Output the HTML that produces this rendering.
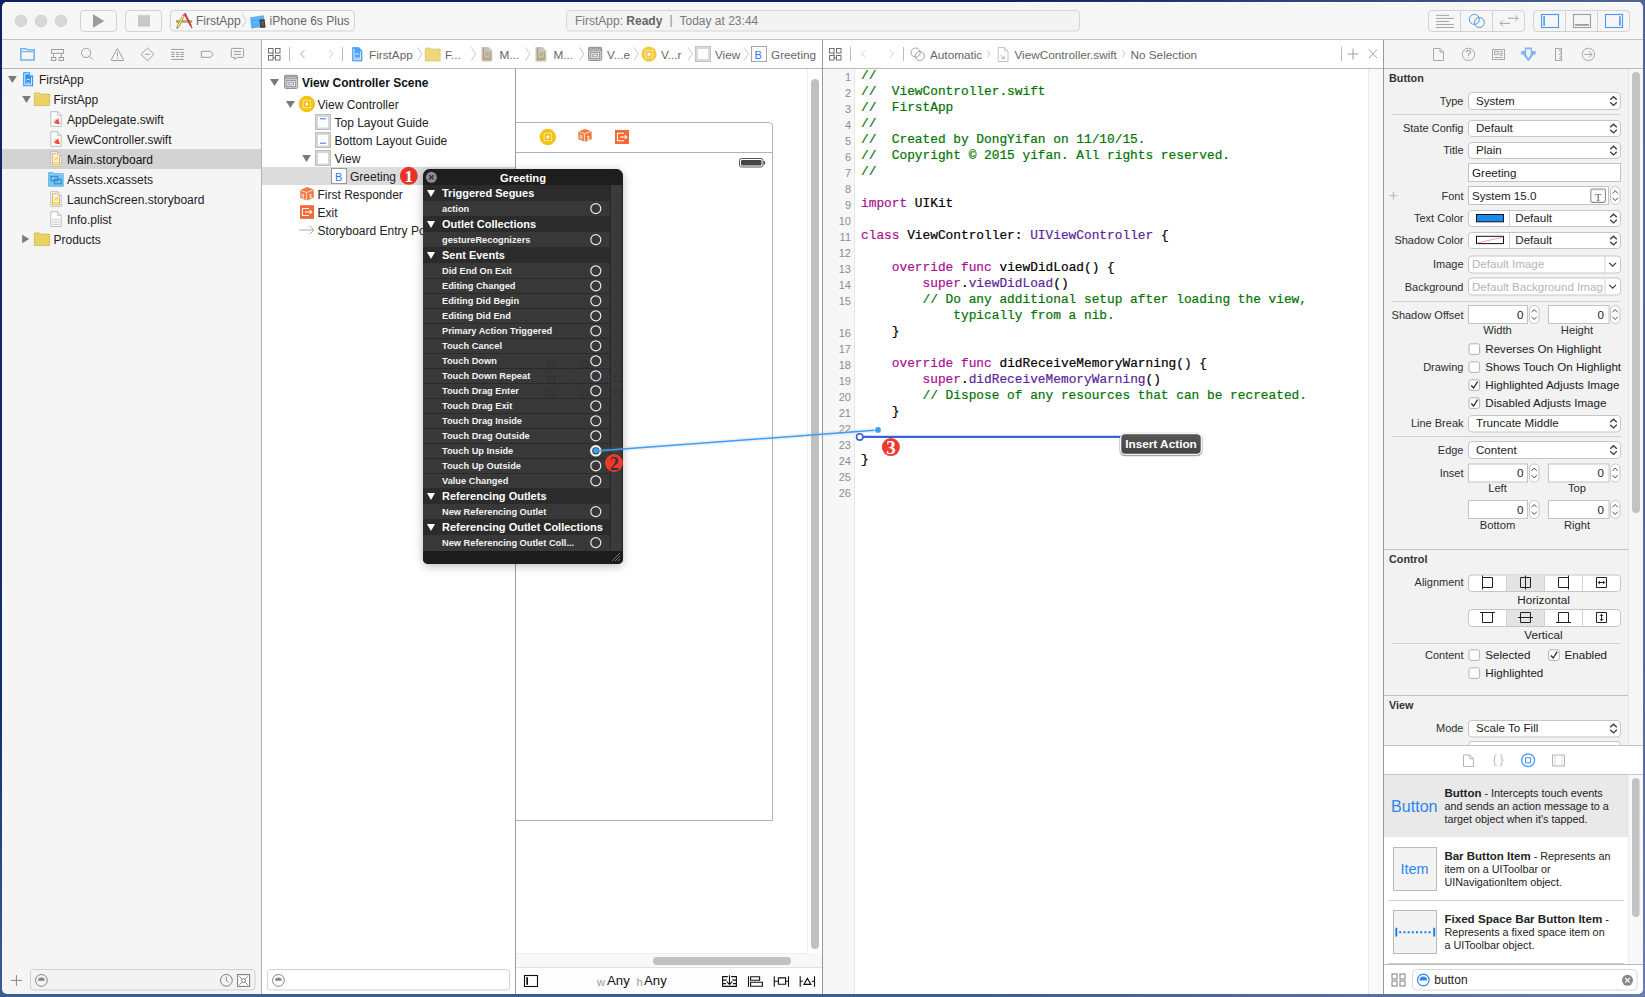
<!DOCTYPE html>
<html><head><meta charset="utf-8">
<style>
*{box-sizing:border-box;margin:0;padding:0}
html,body{width:1645px;height:997px;overflow:hidden}
body{background:linear-gradient(90deg,rgba(0,0,0,0) 60%,rgba(140,155,190,0.55) 100%),linear-gradient(180deg,#0a2462 0%,#102e6a 70%,#3c5c96 100%);font-family:"Liberation Sans",sans-serif;font-size:12px;color:#222;position:relative}
.a{position:absolute}
#win{position:absolute;left:0;top:0;width:1645px;height:997px;clip-path:inset(2px 2px 3px 2px round 5px)}
.t{position:absolute;white-space:pre;line-height:14px;height:14px}
.hl{position:absolute;height:1px;background:#b4b4b4}
.vl{position:absolute;width:1px;background:#a0a0a0}
svg.ov{position:absolute;left:0;top:0;overflow:visible}
.g{color:#666}
.code{position:absolute;left:861px;font-family:"Liberation Mono",monospace;font-size:12.82px;line-height:16px;white-space:pre;color:#000;-webkit-text-stroke:0.2px currentColor}
.ln{position:absolute;left:823px;width:28px;text-align:right;font-family:"Liberation Sans",sans-serif;font-size:11px;color:#8e8e8e;line-height:16px}
.cm{color:#007400}.kw{color:#aa0d91}.ty{color:#5c2699}
.lb{position:absolute;right:181.5px;white-space:pre;font-size:11px;line-height:14px;color:#2e2e2e;text-align:right}
.pv{position:absolute;white-space:pre;font-size:11.6px;line-height:14px;color:#1a1a1a}
.sl{position:absolute;white-space:pre;font-size:11.2px;line-height:14px;color:#2e2e2e;text-align:center;width:80px}
.hd{position:absolute;white-space:pre;font-size:10.8px;font-weight:bold;line-height:14px;color:#333}
</style></head><body>
<div id="win">
  <!-- ===== BACKGROUNDS ===== -->
  <div class="a" style="left:0;top:0;width:1645px;height:39px;background:#f6f6f6"></div>
  <div class="hl" style="left:0;top:39px;width:1645px;background:#c4c4c4"></div>
  <div class="a" style="left:0;top:40px;width:261px;height:28px;background:#f5f5f5"></div>
  <div class="a" style="left:262px;top:40px;width:560px;height:28px;background:#fff"></div>
  <div class="a" style="left:823px;top:40px;width:560px;height:28px;background:#fff"></div>
  <div class="a" style="left:1384px;top:40px;width:261px;height:28px;background:#f5f5f5"></div>
  <div class="hl" style="left:0;top:68px;width:1645px;background:#b9b9b9"></div>
  <div class="a" style="left:0;top:69px;width:261px;height:928px;background:#f5f5f5"></div>
  <div class="vl" style="left:261px;top:40px;height:957px;background:#b2b2b2"></div>
  <div class="a" style="left:262px;top:69px;width:253px;height:928px;background:#fff"></div>
  <div class="vl" style="left:515px;top:69px;height:928px;background:#9d9d9d"></div>
  <div class="a" style="left:516px;top:69px;width:306px;height:928px;background:#fff"></div>
  <div class="vl" style="left:822px;top:40px;height:957px;background:#999"></div>
  <div class="a" style="left:823px;top:69px;width:560px;height:928px;background:#fff"></div>
  <div class="vl" style="left:1383px;top:40px;height:957px;background:#999"></div>
  <div class="a" style="left:1384px;top:69px;width:261px;height:928px;background:#f2f2f2"></div>

  <!-- ===== TOOLBAR ===== -->
  <div class="a" style="left:2px;top:2px;width:1641px;height:1px;background:#fff"></div>
  <svg class="ov" width="1645" height="40">
    <circle cx="21" cy="21" r="5.8" fill="#d8d8d8" stroke="#cdcdcd" stroke-width="0.8"/>
    <circle cx="41" cy="21" r="5.8" fill="#d8d8d8" stroke="#cdcdcd" stroke-width="0.8"/>
    <circle cx="61" cy="21" r="5.8" fill="#d8d8d8" stroke="#cdcdcd" stroke-width="0.8"/>
    <rect x="80.5" y="10.5" width="36" height="21" rx="3.5" fill="#f7f7f7" stroke="#d2d2d2"/>
    <path d="M93 14.2 L104.3 21 L93 27.8Z" fill="#9c9c9c"/>
    <rect x="125.5" y="10.5" width="36" height="21" rx="3.5" fill="#f7f7f7" stroke="#d2d2d2"/>
    <rect x="138" y="15.2" width="12" height="11.5" fill="#c9c9c9"/>
    <rect x="170.5" y="10.5" width="184" height="20.5" rx="3.5" fill="#f7f7f7" stroke="#d2d2d2"/>
    <!-- xcode app icon -->
    <rect x="176" y="20.2" width="16.2" height="2.5" fill="#b79566"/>
    <path d="M176.6 21.2 H191.6" stroke="#d8c09a" stroke-width="0.5"/>
    <path d="M184.6 13.3 L191.2 26.4" stroke="#c73a3a" stroke-width="2"/>
    <path d="M191.2 26.4 L192 28.3" stroke="#8a6a5a" stroke-width="1.2"/>
    <path d="M182.8 17 L177.6 27.2" stroke="#6a6a40" stroke-width="2.6"/>
    <path d="M182.8 17 L177.6 27.2" stroke="#f2e64a" stroke-width="1.7"/>
    <path d="M183.2 16.3 L184.1 14.6" stroke="#e8607a" stroke-width="2.4"/>
    <path d="M177.5 27.3 L176.9 28.5" stroke="#444" stroke-width="1.2"/>
    <path d="M242 14 L246.4 20.8 L242 27.5" fill="none" stroke="#c4c4c4" stroke-width="0.8"/>
    <!-- simulator icon -->
    <path d="M250.2 17.2 L263.8 15.3 L265 27 L251.2 28.4Z" fill="#56adf2"/>
    <path d="M252 18.6 L262.4 17.2 M253 23 L262.8 21.8" stroke="#8ccaf8" stroke-width="0.5"/>
    <path d="M259.4 19.8 L264.6 19.2 L265.6 27.4 L260.4 28.1Z" fill="#3a3a3a"/>
    <path d="M260.5 21 L263.8 20.6 L264.5 26.2 L261.2 26.6Z" fill="#5a5a5a"/>
    <rect x="566.5" y="10.5" width="513" height="20.5" rx="3.5" fill="#f3f3f3" stroke="#d6d6d6"/>
    <!-- right segmented groups -->
    <rect x="1428.5" y="10.5" width="96" height="21" rx="3.5" fill="#f6f6f6" stroke="#d3d3d3"/>
    <path d="M1460.5 11 V31 M1492.5 11 V31" stroke="#d3d3d3"/>
    <path d="M1436 15.4 H1449 M1436 18.4 H1454 M1436 21.5 H1449 M1436 24.5 H1454 M1436 27.5 H1454" stroke="#9e9e9e" stroke-width="0.9"/>
    <circle cx="1474.3" cy="19.4" r="5" fill="none" stroke="#4a98f2" stroke-width="1"/>
    <circle cx="1479.4" cy="22.5" r="5" fill="none" stroke="#4a98f2" stroke-width="1"/>
    <path d="M1508 18.3 H1518 M1515 15.3 L1518 18.3 L1515 21.3 M1500 23.4 H1510 M1503 20.4 L1500 23.4 L1503 26.4" fill="none" stroke="#9e9e9e" stroke-width="0.9"/>
    <rect x="1533.5" y="10.5" width="96" height="21" rx="3.5" fill="#f6f6f6" stroke="#d3d3d3"/>
    <path d="M1565.5 11 V31 M1597.5 11 V31" stroke="#d3d3d3"/>
    <rect x="1541.5" y="14.5" width="17" height="13" fill="none" stroke="#4a98f2" stroke-width="1.1"/>
    <rect x="1543.3" y="16.2" width="1.6" height="9.6" fill="#4a98f2"/>
    <rect x="1573.5" y="14.5" width="17" height="13" fill="none" stroke="#9e9e9e" stroke-width="1.1"/>
    <rect x="1575" y="24" width="14" height="1.8" fill="#9e9e9e"/>
    <rect x="1605.5" y="14.5" width="17" height="13" fill="none" stroke="#4a98f2" stroke-width="1.1"/>
    <rect x="1619.1" y="16.2" width="1.6" height="9.6" fill="#4a98f2"/>
  </svg>
  <div class="t g" style="left:196px;top:14px">FirstApp</div>
  <div class="t g" style="left:269.5px;top:14px">iPhone 6s Plus</div>
  <div class="t" style="left:575px;top:14px;color:#7a7a7a">FirstApp: <b style="color:#666">Ready</b></div>
  <div class="t" style="left:669.5px;top:13px;color:#8a8a8a">|</div>
  <div class="t" style="left:679.5px;top:14px;color:#7a7a7a">Today at 23:44</div>

  <!-- ===== NAVIGATOR ===== -->
  <svg class="ov" width="1645" height="997">
    <!-- nav bar icons -->
    <path d="M20.8 60 V48.8 H26 L27 49.8 H34.2 V60Z" fill="none" stroke="#74b0f6" stroke-width="1.6"/>
    <path d="M21.5 51.6 H33.5" stroke="#74b0f6" stroke-width="1.2"/>
    <g fill="none" stroke="#9d9d9d" stroke-width="1">
      <rect x="51.5" y="49.5" width="12" height="3.8"/>
      <path d="M53.6 53.3 V57.3 M61.4 53.3 V57.3"/>
      <rect x="51.5" y="57.5" width="4.3" height="3"/>
      <rect x="59.2" y="57.5" width="4.3" height="3"/>
      <circle cx="86.1" cy="52.9" r="4.6"/>
      <path d="M89.4 56.2 L93 59.8"/>
      <path d="M117.4 48.6 L123.6 59.8 Q123.9 60.5 123.1 60.5 H111.7 Q110.9 60.5 111.2 59.8Z" stroke-linejoin="round"/>
      <path d="M117.4 52.3 V56.6 M117.4 58 V59"/>
      <path d="M147.5 48 L154 54.4 L147.5 60.8 L141 54.4Z" stroke-linejoin="round"/>
      <path d="M145.2 54.4 H149.8"/>
      <path d="M171.2 49.4 H183.9 M171.2 59.4 H183.9"/>
      <path d="M171.2 52.4 H174.8 M176 52.4 H179 M180.2 52.4 H183.9 M171.2 54.4 H174.8 M176 54.4 H179 M180.2 54.4 H183.9 M171.2 56.5 H174.8 M176 56.5 H179 M180.2 56.5 H183.9"/>
      <path d="M201.3 51.3 H210.5 L213.4 54.3 L210.5 57.3 H201.3Z"/>
      <path d="M232.3 48.4 H242.6 Q243.6 48.4 243.6 49.4 V56.4 Q243.6 57.4 242.6 57.4 H237.2 L234.7 59.4 V57.4 H232.3 Q231.3 57.4 231.3 56.4 V49.4 Q231.3 48.4 232.3 48.4Z"/>
      <path d="M234 51.5 H241 M234 54.4 H241"/>
    </g>
    <!-- tree -->
    <path d="M8 76 L16.8 76 L12.4 83Z" fill="#7a7a7a"/>
    <path d="M22.2 96 L30.8 96 L26.5 103Z" fill="#7a7a7a"/>
    <path d="M22.2 234.8 L29.2 239 L22.2 243.2Z" fill="#7a7a7a"/>
    <!-- project icon -->
    <path d="M23.2 72.2 H29.8 L33.1 75.5 V86.2 H23.2Z" fill="#2a8ff2"/>
    <path d="M29.8 72.2 V75.5 H33.1Z" fill="#e6f1fd"/>
    <path d="M24.8 73.8 H29 M24.8 73.8 V84.8 H31.6 V77" fill="none" stroke="#fff" stroke-width="0.9"/>
    <path d="M26.2 83.1 H30.3" stroke="#fff" stroke-width="0.9"/>
    <path d="M26.4 80.2 Q28.2 77.6 30 80.2" fill="none" stroke="#fff" stroke-width="1"/>
    <!-- folder icons -->
    <path d="M34.4 93 H39.5 L40.5 94.1 H49.6 V105.6 H34.4Z" fill="#e9d262" stroke="#c9b24a" stroke-width="0.7"/>
    <path d="M34.8 94.3 H39 L39.7 95.1" fill="none" stroke="#f7ea80" stroke-width="0.8"/>
    <path d="M34.4 233 H39.5 L40.5 234.1 H49.6 V245.6 H34.4Z" fill="#e9d262" stroke="#c9b24a" stroke-width="0.7"/>
    <!-- swift files -->
    <g>
      <path d="M50.8 111.7 H57.5 L61.2 115.4 V126.4 H50.8Z" fill="#fff" stroke="#b8b8b8" stroke-width="0.9"/>
      <path d="M57.5 111.7 V115.4 H61.2" fill="none" stroke="#b8b8b8" stroke-width="0.8"/>
      <path d="M52.6 121.8 Q56.2 124.8 60 123.89999999999999 Q58.6 122.19999999999999 58.3 117.8 Q57.4 120.8 55 119.0 Q56.4 121.0 56.4 121.39999999999999 Q54.8 120.6 53.3 119.19999999999999 Q54.6 121.19999999999999 55.4 122.1 Q54 122.39999999999999 52.6 121.8Z" fill="#f2492c"/>
      <path d="M50.8 131.7 H57.5 L61.2 135.4 V146.4 H50.8Z" fill="#fff" stroke="#b8b8b8" stroke-width="0.9"/>
      <path d="M57.5 131.7 V135.4 H61.2" fill="none" stroke="#b8b8b8" stroke-width="0.8"/>
      <path d="M52.6 141.79999999999998 Q56.2 144.79999999999998 60 143.9 Q58.6 142.2 58.3 137.79999999999998 Q57.4 140.79999999999998 55 139.0 Q56.4 141.0 56.4 141.4 Q54.8 140.6 53.3 139.2 Q54.6 141.2 55.4 142.1 Q54 142.4 52.6 141.79999999999998Z" fill="#f2492c"/>
    </g>
    <!-- selected row -->
  </svg>
  <div class="a" style="left:2px;top:149px;width:259px;height:20px;background:#d3d3d3"></div>
  <svg class="ov" width="1645" height="997">
    <!-- storyboard files -->
    <path d="M50.8 151.7 H57.5 L61.2 155.39999999999998 V166.39999999999998 H50.8Z" fill="#fff" stroke="#b5b5b5" stroke-width="0.9"/>
    <path d="M57.5 151.7 V155.39999999999998 H61.2" fill="none" stroke="#b5b5b5" stroke-width="0.8"/>
    <path d="M52.6 153.5 H56.6 M52.6 153.5 V164.7 H59.4 V156.29999999999998" fill="none" stroke="#f0b428" stroke-width="1.1"/>
    <path d="M53 162.89999999999998 H59" stroke="#f0b428" stroke-width="0.9"/>
    <path d="M54.2 160.29999999999998 L57.8 156.89999999999998 M54.4 158.1 Q56 156.5 58 159.29999999999998 Q57 160.89999999999998 54.8 159.7" fill="none" stroke="#f0b428" stroke-width="0.8"/>
    <!-- assets -->
    <path d="M48.5 172.6 H53 L54 173.6 H63.3 V186.3 H48.5Z" fill="#74c6f4" stroke="#52abe0" stroke-width="0.7"/>
    <path d="M48.8 174.6 H63" stroke="#9ad8f8" stroke-width="0.6"/>
    <rect x="51" y="176.3" width="6.8" height="4.6" fill="#74c6f4" stroke="#2b7fc4" stroke-width="0.9"/>
    <rect x="54.4" y="179.2" width="6.8" height="4.6" fill="none" stroke="#2b7fc4" stroke-width="0.9"/>
    <path d="M50.8 191.7 H57.5 L61.2 195.39999999999998 V206.39999999999998 H50.8Z" fill="#fff" stroke="#b5b5b5" stroke-width="0.9"/>
    <path d="M57.5 191.7 V195.39999999999998 H61.2" fill="none" stroke="#b5b5b5" stroke-width="0.8"/>
    <path d="M52.6 193.5 H56.6 M52.6 193.5 V204.7 H59.4 V196.29999999999998" fill="none" stroke="#f0b428" stroke-width="1.1"/>
    <path d="M53 202.89999999999998 H59" stroke="#f0b428" stroke-width="0.9"/>
    <path d="M54.2 200.29999999999998 L57.8 196.89999999999998 M54.4 198.1 Q56 196.5 58 199.29999999999998 Q57 200.89999999999998 54.8 199.7" fill="none" stroke="#f0b428" stroke-width="0.8"/>
    <!-- plist -->
    <path d="M50.8 211.7 H57.5 L61.2 215.4 V226.4 H50.8Z" fill="#fff" stroke="#b8b8b8" stroke-width="0.9"/>
    <path d="M57.5 211.7 V215.4 H61.2" fill="none" stroke="#b8b8b8" stroke-width="0.8"/>
    <path d="M52.8 219.5 H59.2 V224.5 H52.8Z M52.8 222 H59.2 M56 219.5 V224.5" fill="none" stroke="#c4c4c4" stroke-width="0.7"/>
    <!-- bottom bar -->
    <path d="M16.4 975 V986 M11 980.4 H22" stroke="#7a7a7a" stroke-width="0.9"/>
    <rect x="30.5" y="969.5" width="224.5" height="20.5" rx="3" fill="#f3f3f3" stroke="#d0d0d0"/>
    <circle cx="41.4" cy="980.4" r="5.9" fill="none" stroke="#858585" stroke-width="1"/>
    <path d="M38 980.8 A3.4 3.4 0 0 1 44.8 980.8Z" fill="#858585"/>
    <circle cx="226.4" cy="980.3" r="5.9" fill="none" stroke="#7e7e7e" stroke-width="1"/>
    <path d="M226.4 976.8 V980.6 L228.6 982.6" fill="none" stroke="#7e7e7e" stroke-width="0.9"/>
    <rect x="237.6" y="974.6" width="12" height="11.8" fill="#fff" stroke="#7e7e7e" stroke-width="1.1"/>
    <path d="M239.3 976.3 L241.8 978.8 M247.9 976.3 L245.4 978.8 M239.3 984.9 L241.8 982.4 M247.9 984.9 L245.4 982.4" stroke="#7e7e7e" stroke-width="0.9"/>
    <circle cx="243.6" cy="980.6" r="2" fill="#fff" stroke="#7e7e7e" stroke-width="1"/>
  </svg>
  <div class="t" style="left:39px;top:73px">FirstApp</div>
  <div class="t" style="left:53.5px;top:93px">FirstApp</div>
  <div class="t" style="left:67px;top:113px">AppDelegate.swift</div>
  <div class="t" style="left:67px;top:133px">ViewController.swift</div>
  <div class="t" style="left:67px;top:153px;color:#111">Main.storyboard</div>
  <div class="t" style="left:67px;top:173px">Assets.xcassets</div>
  <div class="t" style="left:67px;top:193px">LaunchScreen.storyboard</div>
  <div class="t" style="left:67px;top:213px">Info.plist</div>
  <div class="t" style="left:53.5px;top:233px">Products</div>

  <!-- ===== OUTLINE ===== -->
  <div class="a" style="left:262px;top:167px;width:253px;height:18px;background:#dcdcdc"></div>
  <svg class="ov" width="1645" height="997">
    <!-- jump bar 1 -->
    <g fill="none" stroke="#6e6e6e" stroke-width="1">
      <rect x="268.5" y="48.5" width="4.5" height="4.5"/><rect x="275.5" y="48.5" width="4.5" height="4.5"/>
      <rect x="268.5" y="55.5" width="4.5" height="4.5"/><rect x="275.5" y="55.5" width="4.5" height="4.5"/>
      <path d="M273 53 V55.5 M275.5 57.8 H273"/>
    </g>
    <g fill="none" stroke="#8c8c8c" stroke-width="1">
      <path d="M268.5 48.5 H273 V53 H268.5Z M275.5 48.5 H280.5 V53 H275.5Z M268.5 55.5 H273 V60.5 H268.5Z M275.5 55.5 H280.5 V60.5 H275.5Z" stroke="none"/>
    </g>
    <path d="M289.5 47 V61" stroke="#bdbdbd"/>
    <path d="M304.5 50 L300.5 54 L304.5 58" fill="none" stroke="#a6a6a6" stroke-width="1"/>
    <path d="M329 50 L333 54 L329 58" fill="none" stroke="#cfcfcf" stroke-width="1"/>
    <path d="M342.5 47 V61" stroke="#bdbdbd"/>
    <path d="M352.5 47.5 H358.8 L362 50.8 V61 H352.5Z" fill="#4fa3f2" stroke="#3d8fe0" stroke-width="0.6"/>
    <path d="M354 49 V59.6 H360.6 V51.5 M354.7 58 H360" fill="none" stroke="#fff" stroke-width="0.8"/>
    <path d="M355.2 54.6 Q357.2 52.6 359.2 54.6" fill="none" stroke="#fff" stroke-width="0.8"/>
    <g fill="none" stroke="#bcbcbc" stroke-width="0.8">
      <path d="M417.5 47.3 L421.8 54 L417.5 60.7"/>
      <path d="M471.3 47.3 L475.6 54 L471.3 60.7"/>
      <path d="M525.5 47.3 L529.8 54 L525.5 60.7"/>
      <path d="M579.5 47.3 L583.8 54 L579.5 60.7"/>
      <path d="M634 47.3 L638.3 54 L634 60.7"/>
      <path d="M688 47.3 L692.3 54 L688 60.7"/>
      <path d="M744 47.3 L748.3 54 L744 60.7"/>
    </g>
    <path d="M425.2 48 H429.5 L430.5 49 H440.2 V61 H425.2Z" fill="#ecd77a" stroke="#d2bb55" stroke-width="0.6"/>
    <path d="M481.5 47 H488.5 L492.3 50.8 V61.5 H481.5Z" fill="#c4c4c4"/>
    <path d="M483.5 49 H485.0 M483.5 49 V59.6 H490.3 V52" fill="none" stroke="#b89a50" stroke-width="1"/>
    <path d="M484.0 58 H489.7" stroke="#b89a50" stroke-width="0.8"/>
    <path d="M484.8 55.8 L489.0 51.8 M485.1 53.2 Q486.7 51.8 488.5 54.6 Q487.5 56.2 485.5 55" fill="none" stroke="#b89a50" stroke-width="0.8"/>
    <path d="M535.5 47 H542.5 L546.3 50.8 V61.5 H535.5Z" fill="#c4c4c4"/>
    <path d="M537.5 49 H539.0 M537.5 49 V59.6 H544.3 V52" fill="none" stroke="#b89a50" stroke-width="1"/>
    <path d="M538.0 58 H543.7" stroke="#b89a50" stroke-width="0.8"/>
    <path d="M538.8 55.8 L543.0 51.8 M539.1 53.2 Q540.7 51.8 542.5 54.6 Q541.5 56.2 539.5 55" fill="none" stroke="#b89a50" stroke-width="0.8"/>
    <rect x="588.5" y="47.3" width="13.2" height="13.2" rx="1.3" fill="#c9c9c9" stroke="#959595" stroke-width="1"/>
    <rect x="588.5" y="47.3" width="13.2" height="3.4" fill="#959595"/>
    <path d="M589.6 49.8 L591.0 48.6 L592.8000000000001 49.8 L594.2 48.6 L596.0 49.8 L597.4000000000001 48.6 L599.2 49.8 L600.5 48.6" fill="none" stroke="#d8d8d8" stroke-width="0.8"/>
    <rect x="590.8000000000001" y="52.6" width="8.6" height="6" fill="#f3f3f3" stroke="#959595" stroke-width="1"/>
    <rect x="592.8000000000001" y="54.3" width="4.6" height="2.5" fill="#eee" stroke="#959595" stroke-width="0.9"/>
    <circle cx="649" cy="54.2" r="7.6" fill="#f6c844"/>
    <rect x="645.4" y="50.6" width="7.2" height="7.2" fill="none" stroke="#ffe690" stroke-width="1.1"/>
    <rect x="647" y="52.2" width="4" height="4" fill="#fff" stroke="#ecbc40" stroke-width="0.9"/>
    <rect x="695.5" y="46.5" width="15" height="15" fill="#d9d9d9" stroke="#c4c4c4"/>
    <rect x="698" y="49" width="10" height="10" fill="#fff"/>
    <rect x="751.5" y="46.5" width="15" height="15" fill="#fff" stroke="#a5a5a5"/>
    <text x="754.6" y="58.6" font-family="Liberation Sans" font-size="11" fill="#2a7ae8">B</text>
    <!-- outline tree -->
    <path d="M270 79 L279 79 L274.5 86Z" fill="#7a7a7a"/>
    <path d="M285.9 101 L294.9 101 L290.4 108.1Z" fill="#7a7a7a"/>
    <path d="M302.2 155 L310.9 155 L306.5 162Z" fill="#7a7a7a"/>
    <rect x="284.5" y="75.3" width="13.2" height="13.2" rx="1.3" fill="#c9c9c9" stroke="#959595" stroke-width="1"/>
    <rect x="284.5" y="75.3" width="13.2" height="3.4" fill="#959595"/>
    <path d="M285.59999999999997 77.8 L287.0 76.6 L288.8 77.8 L290.2 76.6 L292.0 77.8 L293.4 76.6 L295.2 77.8 L296.5 76.6" fill="none" stroke="#d8d8d8" stroke-width="0.8"/>
    <rect x="286.8" y="80.6" width="8.6" height="6" fill="#f3f3f3" stroke="#959595" stroke-width="1"/>
    <rect x="288.8" y="82.3" width="4.6" height="2.5" fill="#eee" stroke="#959595" stroke-width="0.9"/>
    <circle cx="306.9" cy="104" r="7.9" fill="#f6c312" stroke="#e9ae00" stroke-width="0.5"/>
    <rect x="303.3" y="100.4" width="7.2" height="7.2" fill="none" stroke="#ffe480" stroke-width="1.1"/>
    <rect x="304.9" y="102" width="4" height="4" fill="#fff" stroke="#e8ac00" stroke-width="0.9"/>
    <g>
      <rect x="315.5" y="114.5" width="15" height="15" fill="#d6d6d6" stroke="#bdbdbd"/>
      <rect x="318" y="117" width="10" height="10.5" fill="#fff"/>
      <path d="M320 118.8 H326" stroke="#2a74d8" stroke-width="1"/>
      <rect x="315.5" y="132.5" width="15" height="15" fill="#d6d6d6" stroke="#bdbdbd"/>
      <rect x="318" y="135" width="10" height="10.5" fill="#fff"/>
      <path d="M320 143.2 H326" stroke="#2a74d8" stroke-width="1"/>
      <rect x="315.5" y="150.5" width="15" height="15" fill="#d6d6d6" stroke="#bdbdbd"/>
      <rect x="318" y="153" width="10" height="10.5" fill="#fff"/>
    </g>
    <rect x="331.5" y="168.5" width="15" height="15" fill="#fff" stroke="#9a9a9a"/>
    <text x="335" y="180.5" font-family="Liberation Sans" font-size="11" fill="#2a7ae8">B</text>
    <circle cx="408.8" cy="175.8" r="9" fill="#e8332a"/>
    <text x="408.8" y="181.8" font-family="Liberation Serif" font-weight="bold" font-size="17" fill="#fff" text-anchor="middle">1</text>
    <!-- first responder cube -->
    <path d="M300.2 190 L307 187 L313.8 189.6 V197.8 L307 200.6 L300.2 197.8Z" fill="#f07a44"/>
    <path d="M300.2 190 L306.5 192.6 L313.8 189.6 M306.5 192.6 V200.6" fill="none" stroke="#fff" stroke-width="0.7"/>
    <path d="M302 193.5 V197.3 M303.6 194 V198" stroke="#fff" stroke-width="0.8"/>
    <text x="309" y="198.4" font-family="Liberation Sans" font-size="6" font-weight="bold" fill="#fff">1</text>
    <!-- exit -->
    <rect x="300" y="205.2" width="14" height="13.7" fill="#f26b36"/>
    <path d="M309 208.5 H302.5 V215.5 H309 M305 212 H311.5 M309.8 210.2 L311.7 212 L309.8 213.8" fill="none" stroke="#fff" stroke-width="1.1"/>
    <!-- entry arrow -->
    <path d="M299.2 230 H314 M309.5 225.6 L314 230 L309.5 234.4" fill="none" stroke="#a9a9a9" stroke-width="1"/>
    <!-- bottom filter -->
    <rect x="267.5" y="969.5" width="242" height="20.5" rx="3" fill="#fff" stroke="#d0d0d0"/>
    <circle cx="278.4" cy="980.4" r="5.9" fill="none" stroke="#858585" stroke-width="1"/>
    <path d="M275 980.8 A3.4 3.4 0 0 1 281.8 980.8Z" fill="#858585"/>
  </svg>
  <div class="t" style="left:369px;top:47.5px;color:#666;font-size:11.75px">FirstApp</div>
  <div class="t" style="left:445px;top:47.5px;color:#666;font-size:11.75px">F...</div>
  <div class="t" style="left:499.5px;top:47.5px;color:#666;font-size:11.75px">M...</div>
  <div class="t" style="left:553.5px;top:47.5px;color:#666;font-size:11.75px">M...</div>
  <div class="t" style="left:607px;top:47.5px;color:#666;font-size:11.75px">V...e</div>
  <div class="t" style="left:661px;top:47.5px;color:#666;font-size:11.75px">V...r</div>
  <div class="t" style="left:715px;top:47.5px;color:#666;font-size:11.75px">View</div>
  <div class="t" style="left:771px;top:47.5px;color:#666;font-size:11.75px">Greeting</div>
  <div class="t" style="left:302px;top:75.7px;font-weight:bold;color:#111">View Controller Scene</div>
  <div class="t" style="left:317.5px;top:97.7px">View Controller</div>
  <div class="t" style="left:334.5px;top:115.7px">Top Layout Guide</div>
  <div class="t" style="left:334.5px;top:133.7px">Bottom Layout Guide</div>
  <div class="t" style="left:334.5px;top:151.7px">View</div>
  <div class="t" style="left:350px;top:169.7px">Greeting</div>
  <div class="t" style="left:317.5px;top:187.7px">First Responder</div>
  <div class="t" style="left:317.5px;top:205.7px">Exit</div>
  <div class="t" style="left:317.5px;top:223.7px">Storyboard Entry Point</div>

  <!-- ===== CANVAS ===== -->
  <svg class="ov" width="1645" height="997">
    <path d="M516 122.5 H769 Q772.5 122.5 772.5 126 V820.5 H516" fill="#fff" stroke="#b3b3b3" stroke-width="1"/>
    <path d="M516 152.5 H772.5" stroke="#b3b3b3" stroke-width="1"/>
    <circle cx="547.8" cy="137" r="7.9" fill="#f6c312" stroke="#e9ae00" stroke-width="0.5"/>
    <rect x="544.2" y="133.4" width="7.2" height="7.2" fill="none" stroke="#ffe480" stroke-width="1.1"/>
    <rect x="545.8" y="135" width="4" height="4" fill="#fff" stroke="#e8ac00" stroke-width="0.9"/>
    <path d="M578.3 131.3 L585 129 L591.7 131.2 V139.3 L585 141.8 L578.3 139.3Z" fill="#f07a44"/>
    <path d="M578.3 131.3 L584.5 133.8 L591.7 131.2 M584.5 133.8 V141.8" fill="none" stroke="#fff" stroke-width="0.7"/>
    <path d="M580.2 134.7 V138.5 M581.8 135.2 V139.2" stroke="#fff" stroke-width="0.8"/>
    <text x="586.8" y="139.6" font-family="Liberation Sans" font-size="6" font-weight="bold" fill="#fff">1</text>
    <rect x="615" y="130" width="14" height="14" fill="#f26b36"/>
    <path d="M624 133.3 H617.5 V140.7 H624 M620 137 H626.5 M624.8 135.2 L626.7 137 L624.8 138.8" fill="none" stroke="#fff" stroke-width="1.1"/>
    <rect x="739.5" y="158.5" width="23.5" height="8.5" rx="2" fill="#fff" stroke="#555" stroke-width="1"/>
    <rect x="741" y="160" width="20.5" height="5.5" rx="1" fill="#444"/>
    <rect x="763.5" y="161" width="1.6" height="3.6" fill="#555"/>
    <!-- vertical scroller -->
    <path d="M807.5 69 V953" stroke="#efefef"/>
    <rect x="811" y="79" width="8" height="870" rx="4" fill="#c1c1c1"/>
    <!-- horizontal scroller -->
    <rect x="516" y="953" width="306" height="15" fill="#f8f8f8"/>
    <path d="M516 953.5 H808" stroke="#ececec"/>
    <rect x="653" y="957" width="138" height="8" rx="4" fill="#c1c1c1"/>
    <path d="M516 967.5 H822" stroke="#e2e2e2"/>
    <rect x="516" y="968" width="306" height="26" fill="#fdfdfd"/>
    <!-- bottom bar icons -->
    <rect x="524.5" y="975.5" width="13" height="11" fill="none" stroke="#111" stroke-width="1.1"/>
    <rect x="526.3" y="977.2" width="1.7" height="7.6" fill="#111"/>
    <g fill="none" stroke="#111" stroke-width="1.1">
      <path d="M727.8 976.6 H722.6 V986.4 H736.4 V976.6 H731.2 M722.6 980.1 H726.6 M732.4 980.1 H736.4 M722.6 983.6 H726 M733 983.6 H736.4 M729.5 975.2 V984.4 M726.7 981.6 L729.5 984.4 L732.3 981.6"/>
      <path d="M748.5 976.2 V986.8 M750.6 976.7 H759.6 V980.2 H750.6Z M750.6 982.2 H762.4 V986.3 H750.6Z"/>
      <path d="M774.3 976.2 V986.8 M788.5 976.2 V986.8 M774.3 981.2 H778.4 M785.6 981.2 H788.5 M778.4 977.9 H785.6 V984.3 H778.4Z"/>
      <path d="M800.2 976.2 V986.8 M814.5 976.2 V986.8 M800.2 981.2 H803 M811.8 981.2 H814.5 M807.4 978.4 L810.9 984.4 H803.9Z"/>
    </g>
  </svg>
  <div class="t" style="left:597px;top:975px;font-size:11px;color:#9a9a9a">w</div>
  <div class="t" style="left:607px;top:974px;font-size:13.2px;color:#111">Any</div>
  <div class="t" style="left:636.5px;top:975px;font-size:11px;color:#9a9a9a">h</div>
  <div class="t" style="left:644px;top:974px;font-size:13.2px;color:#111">Any</div>

  <!-- ===== CODE ===== -->
  <div class="a" style="left:823px;top:69px;width:31px;height:925px;background:#f7f7f7"></div>
  <div class="a" style="left:854px;top:69px;width:1px;height:925px;background:#e6e6e6"></div>
  <div class="a" style="left:1368px;top:69px;width:15px;height:925px;background:#f9f9f9;border-left:1px solid #e8e8e8"></div>
  <div class="ln" style="top:69px">1<br>2<br>3<br>4<br>5<br>6<br>7<br>8<br>9<br>10<br>11<br>12<br>13<br>14<br>15<br><br>16<br>17<br>18<br>19<br>20<br>21<br>22<br>23<br>24<br>25<br>26</div>
  <div class="code" style="top:67.7px"><span class="cm">//
//  ViewController.swift
//  FirstApp
//
//  Created by DongYifan on 11/10/15.
//  Copyright © 2015 yifan. All rights reserved.
//</span>

<span class="kw">import</span> UIKit

<span class="kw">class</span> ViewController: <span class="ty">UIViewController</span> {

    <span class="kw">override</span> <span class="kw">func</span> viewDidLoad() {
        <span class="kw">super</span>.<span class="ty">viewDidLoad</span>()
        <span class="cm">// Do any additional setup after loading the view,
            typically from a nib.</span>
    }

    <span class="kw">override</span> <span class="kw">func</span> didReceiveMemoryWarning() {
        <span class="kw">super</span>.<span class="ty">didReceiveMemoryWarning</span>()
        <span class="cm">// Dispose of any resources that can be recreated.</span>
    }


}
</div>
  <!-- jump bar 2 -->
  <svg class="ov" width="1645" height="997">
    <g fill="none" stroke="#6e6e6e" stroke-width="1">
      <rect x="829.5" y="48.5" width="4.5" height="4.5"/><rect x="836.5" y="48.5" width="4.5" height="4.5"/>
      <rect x="829.5" y="55.5" width="4.5" height="4.5"/><rect x="836.5" y="55.5" width="4.5" height="4.5"/>
      <path d="M834 53 V55.5 M836.5 57.8 H834"/>
    </g>
    <path d="M850.5 47 V61" stroke="#bdbdbd"/>
    <path d="M865.5 50 L861.5 54 L865.5 58" fill="none" stroke="#cfcfcf" stroke-width="1"/>
    <path d="M889.5 50 L893.5 54 L889.5 58" fill="none" stroke="#cfcfcf" stroke-width="1"/>
    <path d="M903.5 47 V61" stroke="#bdbdbd"/>
    <circle cx="915.6" cy="52.6" r="4.6" fill="none" stroke="#a0a0a0" stroke-width="1"/>
    <circle cx="919.8" cy="56" r="4.6" fill="none" stroke="#a0a0a0" stroke-width="1"/>
    <path d="M987.5 50.5 L989.8 54 L987.5 57.5" fill="none" stroke="#c2c2c2" stroke-width="0.9"/>
    <path d="M998.2 47.5 H1004.5 L1008 51 V61.5 H998.2Z" fill="#fff" stroke="#b5b5b5" stroke-width="0.8"/>
    <path d="M1004.5 47.5 V51 H1008" fill="none" stroke="#b5b5b5" stroke-width="0.7"/>
    <path d="M1000.5 55 L1004 58.5 M1001.5 58.6 H1004.2 V56" fill="none" stroke="#a0a0a0" stroke-width="0.8"/>
    <path d="M1122.5 50.5 L1124.8 54 L1122.5 57.5" fill="none" stroke="#c2c2c2" stroke-width="0.9"/>
    <path d="M1341.5 47 V61" stroke="#bdbdbd"/>
    <path d="M1353 48.5 V59.5 M1347.5 54 H1358.5" stroke="#9e9e9e" stroke-width="1"/>
    <path d="M1369 49.5 L1377 58 M1377 49.5 L1369 58" stroke="#a8a8a8" stroke-width="1"/>
  </svg>
  <div class="t" style="left:930px;top:47.5px;color:#666;font-size:11.75px">Automatic</div>
  <div class="t" style="left:1014.5px;top:47.5px;color:#666;font-size:11.75px">ViewController.swift</div>
  <div class="t" style="left:1130.5px;top:47.5px;color:#666;font-size:11.75px">No Selection</div>

  <!-- ===== INSPECTOR ===== -->
  <div class="a" style="left:1628px;top:69px;width:17px;height:676px;background:#f6f6f6;border-left:1px solid #e4e4e4"></div>
  <svg class="ov" width="1645" height="997">
    <defs>
      <g id="chev"><path d="M-3.3 -1.2 L0 -4.3 L3.3 -1.2 M-3.3 1.3 L0 4.4 L3.3 1.3" fill="none" stroke="#3a3a3a" stroke-width="1.3"/></g>
      <g id="stp"><path d="M-2.6 -2.2 L0 -5 L2.6 -2.2 M-2.6 2.2 L0 5 L2.6 2.2" fill="none" stroke="#444" stroke-width="0.95"/></g>
      <g id="dn"><path d="M-3.4 -1.7 L0 1.7 L3.4 -1.7" fill="none" stroke="#333" stroke-width="1.1"/></g>
    </defs>
    <!-- tabs -->
    <g fill="none" stroke="#a8a8a8" stroke-width="1">
      <path d="M1433.5 48.5 H1440 L1443.5 52 V60.5 H1433.5Z M1440 48.5 V52 H1443.5"/>
      <circle cx="1468.5" cy="54.4" r="6.2"/>
      <path d="M1466.4 52.5 Q1466.4 50.4 1468.5 50.4 Q1470.6 50.4 1470.6 52.3 Q1470.6 53.7 1468.5 54.6 V56" stroke-width="1.1"/><path d="M1468.5 57.4 V58.6" stroke-width="1.2"/>
      <rect x="1492.5" y="49.5" width="12" height="10"/>
      <rect x="1494.5" y="51.3" width="3.5" height="3.3"/>
      <path d="M1499.5 51.6 H1502.8 M1499.5 53.4 H1502.8 M1499.5 55.2 H1502.8 M1494.3 57.5 H1502.8"/>
      <rect x="1555.5" y="48.5" width="6" height="12"/>
      <path d="M1559 50.5 H1561.5 M1559.8 52.5 H1561.5 M1559 54.5 H1561.5 M1559.8 56.5 H1561.5 M1559 58.5 H1561.5"/>
      <circle cx="1588.4" cy="54.4" r="6.2"/>
      <path d="M1584.5 54.4 H1592 M1589 51.4 L1592 54.4 L1589 57.4"/>
    </g>
    <path d="M1524.8 47.4 H1532 V51 H1535.6 V54.4 H1533.6 L1528.4 61.4 L1523.2 54.4 H1521.2 V51 H1524.8Z" fill="#7ab5f6"/>
    <path d="M1526.1 49.3 H1530.7 V54.6 L1528.4 58.4 L1526.1 54.6Z" fill="#f2f2f2"/>
    <!-- scrollbar -->
    <rect x="1632" y="72" width="8" height="441" rx="4" fill="#c3c3c3"/>
    <!-- popups -->
    <g fill="#fff" stroke="#c6c6c6" stroke-width="1">
      <rect x="1468.5" y="92.5" width="152" height="17" rx="3.5"/>
      <rect x="1468.5" y="120.5" width="152" height="16" rx="3.5"/>
      <rect x="1468.5" y="142.5" width="152" height="16" rx="3.5"/>
      <rect x="1468.5" y="163.5" width="152" height="18" stroke="#c2c2c2"/>
      <rect x="1468.5" y="186.5" width="140" height="18" stroke="#c2c2c2"/>
      <rect x="1610.5" y="186.5" width="9.5" height="18" rx="4.5"/>
      <rect x="1468.5" y="210.5" width="152" height="16" rx="3.5"/>
      <rect x="1468.5" y="232.5" width="152" height="16" rx="3.5"/>
      <rect x="1468.5" y="256" width="152" height="17" rx="3.5"/>
      <rect x="1468.5" y="278" width="152" height="17" rx="3.5"/>
      <rect x="1468.5" y="305.5" width="59" height="18" stroke="#c2c2c2"/>
      <rect x="1529.5" y="305.5" width="9.5" height="18" rx="4.5"/>
      <rect x="1548.5" y="305.5" width="60.5" height="18" stroke="#c2c2c2"/>
      <rect x="1610.5" y="305.5" width="9.5" height="18" rx="4.5"/>
      <rect x="1468.5" y="415.5" width="152" height="16.5" rx="3.5"/>
      <rect x="1468.5" y="441.5" width="152" height="17" rx="3.5"/>
      <rect x="1468.5" y="464" width="59" height="18" stroke="#c2c2c2"/>
      <rect x="1529.5" y="464" width="9.5" height="18" rx="4.5"/>
      <rect x="1548.5" y="464" width="60.5" height="18" stroke="#c2c2c2"/>
      <rect x="1610.5" y="464" width="9.5" height="18" rx="4.5"/>
      <rect x="1468.5" y="500.5" width="59" height="18" stroke="#c2c2c2"/>
      <rect x="1529.5" y="500.5" width="9.5" height="18" rx="4.5"/>
      <rect x="1548.5" y="500.5" width="60.5" height="18" stroke="#c2c2c2"/>
      <rect x="1610.5" y="500.5" width="9.5" height="18" rx="4.5"/>
      <rect x="1468.5" y="720.5" width="152" height="16.5" rx="3.5"/>
      <rect x="1468.5" y="741.5" width="152" height="16.5" rx="3.5"/>
    </g>
    <path d="M1509.5 211 V226 M1509.5 233 V248 M1605 256.5 V272.5 M1605 278.5 V294.5" stroke="#d0d0d0"/>
    <use href="#chev" x="1613.5" y="101"/>
    <use href="#chev" x="1613.5" y="128.5"/>
    <use href="#chev" x="1613.5" y="150.5"/>
    <use href="#chev" x="1613.5" y="218.5"/>
    <use href="#chev" x="1613.5" y="240.5"/>
    <use href="#chev" x="1613.5" y="423.5"/>
    <use href="#chev" x="1613.5" y="450"/>
    <use href="#chev" x="1613.5" y="728.5"/>
    <use href="#dn" x="1612.6" y="264.5"/>
    <use href="#dn" x="1612.6" y="286.5"/>
    <use href="#stp" x="1615.2" y="195.6"/>
    <use href="#stp" x="1534.2" y="314.5"/>
    <use href="#stp" x="1615.2" y="314.5"/>
    <use href="#stp" x="1534.2" y="473"/>
    <use href="#stp" x="1615.2" y="473"/>
    <use href="#stp" x="1534.2" y="509.5"/>
    <use href="#stp" x="1615.2" y="509.5"/>
    <!-- font T icon -->
    <rect x="1590.8" y="189" width="14.6" height="13.4" rx="1.6" fill="#fff" stroke="#888" stroke-width="1.1"/>
    <path d="M1592.5 190.4 H1603.7" stroke="#aaa" stroke-width="0.6" stroke-dasharray="0.8 0.8"/>
    <text x="1598.1" y="200.6" font-family="Liberation Serif" font-size="11" fill="#666" text-anchor="middle">T</text>
    <!-- color wells -->
    <rect x="1476.5" y="214.5" width="27" height="7.3" fill="#1a8af0" stroke="#111" stroke-width="1"/>
    <rect x="1476.5" y="236.3" width="27" height="7.3" fill="#fff" stroke="#111" stroke-width="1"/>
    <path d="M1477.5 243 L1503 237" stroke="#f08a8a" stroke-width="0.8"/>
    <!-- plus -->
    <path d="M1393.4 191.8 V199.6 M1389.5 195.7 H1397.3" stroke="#b0b0b0" stroke-width="0.9"/>
    <!-- separators -->
    <path d="M1392 114.5 H1620.5 M1392 301.5 H1620.5 M1392 436.5 H1620.5 M1392 643.5 H1620.5" stroke="#d2d2d2"/>
    <path d="M1384 549.5 H1628 M1384 695.5 H1628" stroke="#c2c2c2"/>
    <!-- checkboxes -->
    <g fill="#fff" stroke="#a9a9a9" stroke-width="0.9">
      <rect x="1469" y="343.8" width="10.6" height="10.6" rx="2"/>
      <rect x="1469" y="361.8" width="10.6" height="10.6" rx="2"/>
      <rect x="1469" y="379.8" width="10.6" height="10.6" rx="2"/>
      <rect x="1469" y="397.8" width="10.6" height="10.6" rx="2"/>
      <rect x="1469" y="649.8" width="10.6" height="10.6" rx="2"/>
      <rect x="1548.6" y="649.8" width="10.6" height="10.6" rx="2"/>
      <rect x="1469" y="667.8" width="10.6" height="10.6" rx="2"/>
    </g>
    <g fill="none" stroke="#222" stroke-width="1.2">
      <path d="M1471.3 385.5 L1473.6 388 L1477.6 381.6"/>
      <path d="M1471.3 403.5 L1473.6 406 L1477.6 399.6"/>
      <path d="M1550.9 655.5 L1553.2 658 L1557.2 651.6"/>
    </g>
    <!-- segmented alignment -->
    <rect x="1468.5" y="575" width="152" height="16.5" rx="3.5" fill="#fff" stroke="#c6c6c6"/>
    <rect x="1506.5" y="575.5" width="38" height="15.5" fill="#e3e3e3"/>
    <path d="M1506.5 575.5 V591 M1544.5 575.5 V591 M1582.5 575.5 V591" stroke="#d2d2d2"/>
    <rect x="1468.5" y="609.5" width="152" height="17" rx="3.5" fill="#fff" stroke="#c6c6c6"/>
    <rect x="1506.5" y="610" width="38" height="16" fill="#e3e3e3"/>
    <path d="M1506.5 610 V626 M1544.5 610 V626 M1582.5 610 V626" stroke="#d2d2d2"/>
    <g fill="none" stroke="#222" stroke-width="1">
      <path d="M1482.5 575.5 V589.5 M1482.5 577.5 H1492.5 V587.5 H1482.5"/>
      <path d="M1520.5 577.5 H1530.5 V587.5 H1520.5Z M1525.5 575.5 V589.5"/>
      <path d="M1568.5 575.5 V589.5 M1568.5 577.5 H1558.5 V587.5 H1568.5"/>
      <path d="M1596.5 577.5 H1606.5 V587.5 H1596.5Z M1598.3 582.5 H1604.7 M1600 580.8 L1598.3 582.5 L1600 584.2 M1603 580.8 L1604.7 582.5 L1603 584.2"/>
      <path d="M1480 612.5 H1495 M1482.5 612.5 V622.5 H1492.5 V612.5"/>
      <path d="M1520.5 612.5 H1530.5 V622.5 H1520.5Z M1518 617.5 H1533"/>
      <path d="M1556 622.5 H1571 M1558.5 622.5 V612.5 H1568.5 V622.5"/>
      <path d="M1596.5 612.5 H1606.5 V622.5 H1596.5Z M1601.5 614.3 V620.7 M1599.8 616 L1601.5 614.3 L1603.2 616 M1599.8 619 L1601.5 620.7 L1603.2 619"/>
    </g>
  </svg>
  <div class="hd" style="left:1389px;top:71px">Button</div>
  <div class="lb" style="top:94px">Type</div>
  <div class="pv" style="left:1476px;top:94px">System</div>
  <div class="lb" style="top:121px">State Config</div>
  <div class="pv" style="left:1476px;top:121px">Default</div>
  <div class="lb" style="top:143px">Title</div>
  <div class="pv" style="left:1476px;top:143px">Plain</div>
  <div class="pv" style="left:1472px;top:166px">Greeting</div>
  <div class="lb" style="top:189px">Font</div>
  <div class="pv" style="left:1472px;top:189px">System 15.0</div>
  <div class="lb" style="top:211px">Text Color</div>
  <div class="pv" style="left:1515.3px;top:211px">Default</div>
  <div class="lb" style="top:233px">Shadow Color</div>
  <div class="pv" style="left:1515.3px;top:233px">Default</div>
  <div class="lb" style="top:257px">Image</div>
  <div class="pv" style="left:1472px;top:257px;color:#b4b4b4;width:131px;overflow:hidden">Default Image</div>
  <div class="lb" style="top:280px">Background</div>
  <div class="pv" style="left:1472px;top:280px;color:#b4b4b4;width:131px;overflow:hidden">Default Background Image</div>
  <div class="lb" style="top:308px">Shadow Offset</div>
  <div class="pv" style="left:1517px;top:308px">0</div>
  <div class="pv" style="left:1597.5px;top:308px">0</div>
  <div class="sl" style="left:1457.5px;top:323px">Width</div>
  <div class="sl" style="left:1537px;top:323px">Height</div>
  <div class="pv" style="left:1485.3px;top:342px">Reverses On Highlight</div>
  <div class="lb" style="top:360px">Drawing</div>
  <div class="pv" style="left:1485.3px;top:360px">Shows Touch On Highlight</div>
  <div class="pv" style="left:1485.3px;top:378px">Highlighted Adjusts Image</div>
  <div class="pv" style="left:1485.3px;top:396px">Disabled Adjusts Image</div>
  <div class="lb" style="top:416px">Line Break</div>
  <div class="pv" style="left:1476px;top:416px">Truncate Middle</div>
  <div class="lb" style="top:443px">Edge</div>
  <div class="pv" style="left:1476px;top:443px">Content</div>
  <div class="lb" style="top:466px">Inset</div>
  <div class="pv" style="left:1517px;top:466px">0</div>
  <div class="pv" style="left:1597.5px;top:466px">0</div>
  <div class="sl" style="left:1457.5px;top:481px">Left</div>
  <div class="sl" style="left:1537px;top:481px">Top</div>
  <div class="pv" style="left:1517px;top:503px">0</div>
  <div class="pv" style="left:1597.5px;top:503px">0</div>
  <div class="sl" style="left:1457.5px;top:518px">Bottom</div>
  <div class="sl" style="left:1537px;top:518px">Right</div>
  <div class="hd" style="left:1389px;top:552px">Control</div>
  <div class="lb" style="top:575px">Alignment</div>
  <div class="sl" style="left:1503.5px;top:593px;font-size:11.7px;color:#1e1e1e">Horizontal</div>
  <div class="sl" style="left:1503.5px;top:628px;font-size:11.7px;color:#1e1e1e">Vertical</div>
  <div class="lb" style="top:648px">Content</div>
  <div class="pv" style="left:1485.3px;top:648px">Selected</div>
  <div class="pv" style="left:1564.5px;top:648px">Enabled</div>
  <div class="pv" style="left:1485.3px;top:666px">Highlighted</div>
  <div class="hd" style="left:1389px;top:698px">View</div>
  <div class="lb" style="top:721px">Mode</div>
  <div class="pv" style="left:1476px;top:721px">Scale To Fill</div>

  <!-- ===== LIBRARY ===== -->
  <div class="a" style="left:1384px;top:745px;width:261px;height:250px;background:#fff"></div>
  <div class="a" style="left:1384px;top:744.5px;width:261px;height:1px;background:#c4c4c4"></div>
  <div class="a" style="left:1384px;top:774px;width:261px;height:1px;background:#c8c8c8"></div>
  <div class="a" style="left:1384px;top:775px;width:244px;height:62px;background:#e9e9e9"></div>
  <div class="a" style="left:1628px;top:775px;width:17px;height:190px;background:#f8f8f8;border-left:1px solid #ececec"></div>
  <svg class="ov" width="1645" height="997">
    <g fill="none" stroke="#b5b5b5" stroke-width="1">
      <path d="M1463.5 755 H1469.8 L1473.5 758.7 V766.5 H1463.5Z M1469.8 755 V758.7 H1473.5"/>
      <path d="M1496.5 754.8 Q1494.6 754.8 1494.6 756.8 V759 Q1494.6 760.3 1493.3 760.3 Q1494.6 760.3 1494.6 761.6 V764 Q1494.6 766 1496.5 766 M1500 754.8 Q1501.9 754.8 1501.9 756.8 V759 Q1501.9 760.3 1503.2 760.3 Q1501.9 760.3 1501.9 761.6 V764 Q1501.9 766 1500 766"/>
      <rect x="1552.5" y="755" width="12" height="11"/>
      <path d="M1555 756 V765 M1562 756 V765" stroke-dasharray="1 1"/>
    </g>
    <circle cx="1528.1" cy="760.3" r="6.4" fill="none" stroke="#4a9cf5" stroke-width="1.3"/>
    <rect x="1525.6" y="757.8" width="5" height="5" fill="none" stroke="#4a9cf5" stroke-width="1.1"/>
    <rect x="1632" y="778" width="7.6" height="139" rx="3.8" fill="#c3c3c3"/>
    <path d="M1388 900.5 H1624 M1388 963.5 H1624" stroke="#d0d0d0"/>
    <rect x="1393.5" y="847.5" width="43" height="43" fill="#f3f3f3" stroke="#b9b9b9"/>
    <rect x="1393.5" y="910.5" width="43" height="43" fill="#f3f3f3" stroke="#b9b9b9"/>
    <path d="M1396.3 927.8 V936.6 M1434.2 927.8 V936.6" stroke="#1a7de8" stroke-width="1.9"/>
    <path d="M1399.2 932.2 H1432" stroke="#1a7de8" stroke-width="1.9" stroke-dasharray="2 2.2"/>
    <path d="M1384 964.5 H1645" stroke="#b9b9b9"/>
    <g fill="none" stroke="#7e7e7e" stroke-width="1">
      <rect x="1392" y="974" width="5" height="5"/><rect x="1400" y="974" width="5" height="5"/>
      <rect x="1392" y="981" width="5" height="5"/><rect x="1400" y="981" width="5" height="5"/>
    </g>
    <rect x="1412.5" y="969.5" width="224.5" height="20.5" rx="4" fill="#fff" stroke="#d8d8d8"/>
    <circle cx="1423.3" cy="980" r="5.8" fill="none" stroke="#2a86ee" stroke-width="1.2"/>
    <path d="M1419.5 980.4 A3.8 3.8 0 0 1 1427.1 980.4Z" fill="#2a86ee"/>
    <circle cx="1627.5" cy="980.3" r="5.5" fill="#888"/>
    <path d="M1625.2 978 L1629.8 982.6 M1629.8 978 L1625.2 982.6" stroke="#fff" stroke-width="1.1"/>
  </svg>
  <div class="t" style="left:1391px;top:796px;font-size:16.1px;line-height:20px;height:20px;color:#2a86ee">Button</div>
  <div class="t" style="left:1400.5px;top:860px;font-size:14.4px;line-height:18px;height:18px;color:#2a86ee">Item</div>
  <div class="a" style="left:1444.4px;top:786.5px;width:185px;font-size:10.8px;line-height:13.1px;color:#222;white-space:pre"><b style="font-size:11.5px">Button</b> - Intercepts touch events
and sends an action message to a
target object when it's tapped.</div>
  <div class="a" style="left:1444.4px;top:849.5px;width:185px;font-size:10.8px;line-height:13.1px;color:#222;white-space:pre"><b style="font-size:11.5px">Bar Button Item</b> - Represents an
item on a UIToolbar or
UINavigationItem object.</div>
  <div class="a" style="left:1444.4px;top:912px;width:185px;font-size:10.8px;line-height:13.1px;color:#222;white-space:pre"><b style="font-size:11.6px">Fixed Space Bar Button Item</b> -
Represents a fixed space item on
a UIToolbar object.</div>
  <div class="t" style="left:1434.2px;top:973px;font-size:12px;color:#222">button</div>

  <!-- ===== POPUP ===== -->
  <div class="a" style="left:423px;top:169px;width:200px;height:395px;border-radius:7px 7px 5px 5px;background:#383838;box-shadow:0 2px 10px rgba(0,0,0,0.28);overflow:hidden">
    <div class="a" style="left:0;top:0;width:200px;height:16px;background:#1e1e1e"></div>
    <div class="a" style="left:187px;top:16px;width:13px;height:366px;background:#3b3b3b"></div>
    <div class="a" style="left:0;top:381.5px;width:200px;height:14px;background:#1c1c1c"></div>
  </div>
  <svg class="ov" width="1645" height="997">
    <g fill="#2b2b2b">
      <rect x="423" y="185" width="187" height="16"/>
      <rect x="423" y="216" width="187" height="16"/>
      <rect x="423" y="247" width="187" height="16"/>
      <rect x="423" y="488" width="187" height="16"/>
      <rect x="423" y="519" width="187" height="16"/>
    </g>
    <g stroke="#2a2a2a" stroke-width="1">
      <path d="M423 278.5 H610 M423 293.5 H610 M423 308.5 H610 M423 323.5 H610 M423 338.5 H610 M423 353.5 H610 M423 368.5 H610 M423 383.5 H610 M423 398.5 H610 M423 413.5 H610 M423 428.5 H610 M423 443.5 H610 M423 458.5 H610 M423 473.5 H610"/>
    </g>
    <circle cx="431.4" cy="177.3" r="5.5" fill="#8c8c8c"/>
    <path d="M429.3 175.2 L433.5 179.4 M433.5 175.2 L429.3 179.4" stroke="#3a3a3a" stroke-width="1.6"/>
    <g fill="#fff">
      <path d="M427 190 H435 L431 197Z"/>
      <path d="M427 221 H435 L431 228Z"/>
      <path d="M427 252 H435 L431 259Z"/>
      <path d="M427 493 H435 L431 500Z"/>
      <path d="M427 524 H435 L431 531Z"/>
    </g>
    <g fill="none" stroke="#e8e8e8" stroke-width="1.2">
      <circle cx="595.8" cy="208.6" r="5"/>
      <circle cx="595.8" cy="239.6" r="5"/>
      <circle cx="595.8" cy="270.8" r="5"/><circle cx="595.8" cy="285.8" r="5"/><circle cx="595.8" cy="300.8" r="5"/>
      <circle cx="595.8" cy="315.8" r="5"/><circle cx="595.8" cy="330.8" r="5"/><circle cx="595.8" cy="345.8" r="5"/>
      <circle cx="595.8" cy="360.8" r="5"/><circle cx="595.8" cy="375.8" r="5"/><circle cx="595.8" cy="390.8" r="5"/>
      <circle cx="595.8" cy="405.8" r="5"/><circle cx="595.8" cy="420.8" r="5"/><circle cx="595.8" cy="435.8" r="5"/>
      <circle cx="595.8" cy="465.8" r="5"/><circle cx="595.8" cy="480.8" r="5"/>
      <circle cx="595.8" cy="511.6" r="5"/>
      <circle cx="595.8" cy="542.6" r="5"/>
    </g>
    <circle cx="595.8" cy="450.8" r="4.7" fill="none" stroke="#f4f4f4" stroke-width="2.2"/>
    <path d="M610.5 185 V550" stroke="#262626" stroke-width="1"/>
    <path d="M622.3 185 V552" stroke="#262626" stroke-width="1"/>
    <g fill="none" stroke="rgba(20,20,30,0.22)" stroke-width="0.9">
      <rect x="548.6" y="361.6" width="6" height="6"/><rect x="581.4" y="361.6" width="6" height="6"/><rect x="614.2" y="361.6" width="6" height="6"/>
      <rect x="548.6" y="376.2" width="6" height="6"/><rect x="614.2" y="376.2" width="6" height="6"/>
      <rect x="548.6" y="390.5" width="6" height="6"/><rect x="581.4" y="390.5" width="6" height="6"/><rect x="614.2" y="390.5" width="6" height="6"/>
    </g>
    <text x="556" y="382.6" font-family="Liberation Sans" font-size="15.5" fill="rgba(40,70,110,0.22)">Greeting</text>
    <!-- resize grip -->
    <path d="M612 561 L620 553 M615 561 L620 556 M618 561 L620 559" stroke="#8a8a8a" stroke-width="0.8"/>
    <!-- connection line -->
    <path d="M596 451 L878 430" stroke="rgba(120,140,160,0.13)" stroke-width="4.5"/>
    <path d="M596 451 L878 430" stroke="#3aa0f5" stroke-width="1.5"/>
    <circle cx="595.8" cy="450.8" r="2.7" fill="#3aa0f5"/>
    <circle cx="878" cy="429.9" r="3.8" fill="rgba(255,255,255,0.8)"/>
    <circle cx="878" cy="429.9" r="2.9" fill="#3aa0f5"/>
    <!-- insertion indicator -->
    <path d="M863 436.9 H1121" stroke="#3d62d6" stroke-width="2.2"/>
    <circle cx="859.7" cy="436.9" r="3.2" fill="#fff" stroke="#3d62d6" stroke-width="1.6"/>
    <defs><linearGradient id="tipg" x1="0" y1="0" x2="0" y2="1"><stop offset="0" stop-color="#555"/><stop offset="1" stop-color="#444"/></linearGradient></defs>
    <rect x="1119.6" y="433.8" width="82.8" height="22.4" rx="5.2" fill="rgba(0,0,0,0.32)"/>
    <rect x="1120" y="433" width="82" height="22" rx="5" fill="#fff" stroke="rgba(0,0,0,0.18)" stroke-width="0.6"/>
    <rect x="1121.3" y="434.3" width="79.4" height="19.4" rx="4" fill="url(#tipg)"/>
    <!-- badges -->
    <circle cx="614" cy="463" r="9" fill="#f0382b"/>
    <text x="614.3" y="469.6" font-family="Liberation Serif" font-weight="bold" font-size="18" fill="#333" text-anchor="middle">2</text>
    <circle cx="890.9" cy="447.1" r="9" fill="#f0382b"/>
    <text x="891.1" y="454.2" font-family="Liberation Serif" font-weight="bold" font-size="19" fill="#fff" text-anchor="middle">3</text>
  </svg>
  <div class="t" style="left:423px;top:170.5px;width:200px;text-align:center;font-weight:bold;font-size:11.2px;color:#fff">Greeting</div>
  <div class="a" style="left:442px;top:186px;font-size:11px;font-weight:bold;color:#fff;line-height:15.5px;white-space:pre">Triggered Segues</div>
  <div class="a" style="left:442px;top:217px;font-size:11px;font-weight:bold;color:#fff;line-height:15.5px;white-space:pre">Outlet Collections</div>
  <div class="a" style="left:442px;top:248px;font-size:11px;font-weight:bold;color:#fff;line-height:15.5px;white-space:pre">Sent Events</div>
  <div class="a" style="left:442px;top:489px;font-size:11px;font-weight:bold;color:#fff;line-height:15.5px;white-space:pre">Referencing Outlets</div>
  <div class="a" style="left:442px;top:520px;font-size:11px;font-weight:bold;color:#fff;line-height:15.5px;white-space:pre">Referencing Outlet Collections</div>
  <div class="a" style="left:442px;top:201.5px;font-size:9.25px;font-weight:bold;color:#f2f2f2;line-height:15px;white-space:pre">action</div>
  <div class="a" style="left:442px;top:232.5px;font-size:9.25px;font-weight:bold;color:#f2f2f2;line-height:15px;white-space:pre">gestureRecognizers</div>
  <div class="a" style="left:442px;top:263.5px;font-size:9.25px;font-weight:bold;color:#f2f2f2;line-height:15px;white-space:pre">Did End On Exit
Editing Changed
Editing Did Begin
Editing Did End
Primary Action Triggered
Touch Cancel
Touch Down
Touch Down Repeat
Touch Drag Enter
Touch Drag Exit
Touch Drag Inside
Touch Drag Outside
Touch Up Inside
Touch Up Outside
Value Changed</div>
  <div class="a" style="left:442px;top:504.5px;font-size:9.25px;font-weight:bold;color:#f2f2f2;line-height:15px;white-space:pre">New Referencing Outlet</div>
  <div class="a" style="left:442px;top:535.5px;font-size:9.25px;font-weight:bold;color:#f2f2f2;line-height:15px;white-space:pre">New Referencing Outlet Coll...</div>
  <div class="t" style="left:1121px;top:437px;width:80px;text-align:center;font-weight:bold;font-size:11.8px;color:#fff">Insert Action</div>
</div>
</body></html>
